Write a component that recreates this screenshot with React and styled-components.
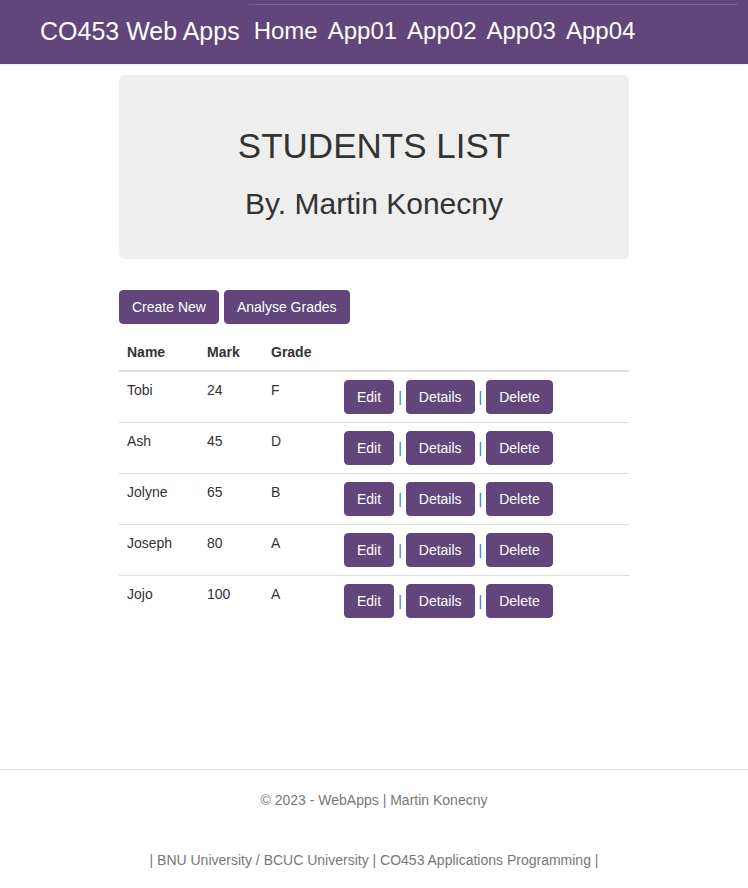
import React from "react";
import styled, { createGlobalStyle } from "styled-components";

const Global = createGlobalStyle`
  html, body { margin: 0; padding: 0; background: #fff; }
  body { font-family: "Liberation Sans", Arial, sans-serif; font-size: 14px; line-height: 20px; color: #333; }
  * { box-sizing: border-box; }
`;

const PURPLE = "#62457a";

const NavBar = styled.nav`
  height: 64px;
  background: ${PURPLE};
  display: flex;
  align-items: flex-start;
  padding-left: 40px;
  box-shadow: 0 1px 2px rgba(0,0,0,0.08);
`;

const Brand = styled.a`
  color: #fff;
  font-size: 25px;
  line-height: 28px;
  padding-top: 17px;
  text-decoration: none;
  margin-right: 9px;
`;

const NavLinks = styled.ul`
  list-style: none;
  margin: 4px 10px 0 0;
  padding: 12px 0 0 0;
  display: flex;
  flex: 1;
  border-top: 1px solid rgba(255,255,255,0.15);
`;

const NavItem = styled.li`
  a {
    display: block;
    color: #fff;
    font-size: 24px;
    line-height: 28px;
    padding: 0 5px;
    text-decoration: none;
  }
`;

const Container = styled.main`
  width: 510px;
  margin: 11px auto 0;
  min-height: 694px;
`;

const Jumbotron = styled.section`
  background: #eee;
  border-radius: 6px;
  height: 184px;
  display: flex;
  flex-direction: column;
  align-items: center;
  padding-top: 50px;
  color: #333;
`;

const Title = styled.h1`
  margin: 0;
  font-size: 35px;
  font-weight: 400;
  line-height: 42px;
`;

const Subtitle = styled.h2`
  margin: 19px 0 0;
  font-size: 30px;
  font-weight: 400;
  line-height: 36px;
`;

const Toolbar = styled.div`
  margin-top: 31px;
  display: flex;
  gap: 5px;
  margin-bottom: 10px;
`;

const Button = styled.a`
  display: inline-block;
  background: ${PURPLE};
  color: #fff;
  border: 1px solid ${PURPLE};
  border-radius: 4px;
  padding: 6px 12px;
  font-size: 14px;
  line-height: 20px;
  text-decoration: none;
  cursor: pointer;
`;

const Table = styled.table`
  width: 100%;
  border-collapse: collapse;
  border-spacing: 0;
`;

const Th = styled.th`
  text-align: left;
  font-weight: 700;
  padding: 8px;
  line-height: 20px;
  border-bottom: 2px solid #ddd;
  width: ${p => p.$w || "auto"};
`;

const Td = styled.td`
  padding: 8px;
  line-height: 20px;
  vertical-align: top;
  border-top: 1px solid #ddd;
  tr:first-child > & { border-top: 0; }
`;

const Actions = styled.div`
  display: flex;
  align-items: center;
`;

const Sep = styled.span`
  color: #337ab7;
  padding: 0 4px;
`;

const Footer = styled.footer`
  border-top: 1px solid #e5e5e5;
  text-align: center;
  color: #777;
  padding-top: 20px;
`;

const FooterLine = styled.p`
  margin: 0 0 40px;
  line-height: 20px;
`;

const students = [
  ["Tobi", 24, "F"],
  ["Ash", 45, "D"],
  ["Jolyne", 65, "B"],
  ["Joseph", 80, "A"],
  ["Jojo", 100, "A"],
];

export default function App() {
  return (
    <>
      <Global />
      <NavBar>
        <Brand href="#">CO453 Web Apps</Brand>
        <NavLinks>
          {["Home", "App01", "App02", "App03", "App04"].map(l => (
            <NavItem key={l}><a href="#">{l}</a></NavItem>
          ))}
        </NavLinks>
      </NavBar>
      <Container>
        <Jumbotron>
          <Title>STUDENTS LIST</Title>
          <Subtitle>By. Martin Konecny</Subtitle>
        </Jumbotron>
        <Toolbar>
          <Button>Create New</Button>
          <Button>Analyse Grades</Button>
        </Toolbar>
        <Table>
          <thead>
            <tr>
              <Th $w="80px">Name</Th>
              <Th $w="64px">Mark</Th>
              <Th $w="73px">Grade</Th>
              <Th></Th>
            </tr>
          </thead>
          <tbody>
            {students.map(([n, m, g]) => (
              <tr key={n}>
                <Td>{n}</Td>
                <Td>{m}</Td>
                <Td>{g}</Td>
                <Td>
                  <Actions>
                    <Button>Edit</Button>
                    <Sep>|</Sep>
                    <Button>Details</Button>
                    <Sep>|</Sep>
                    <Button>Delete</Button>
                  </Actions>
                </Td>
              </tr>
            ))}
          </tbody>
        </Table>
      </Container>
      <Footer>
        <FooterLine>© 2023 - WebApps | Martin Konecny</FooterLine>
        <FooterLine>| BNU University / BCUC University | CO453 Applications Programming |</FooterLine>
      </Footer>
    </>
  );
}
